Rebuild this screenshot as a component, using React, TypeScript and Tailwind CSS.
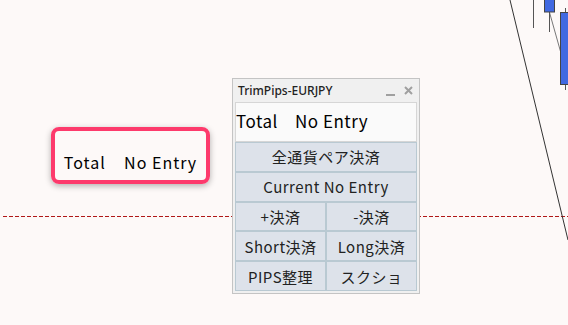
import React from "react";

const jp = { fontFamily: '"Noto Sans CJK JP", "Noto Sans", sans-serif' };

function ChartLayer() {
  return (
    <svg className="absolute inset-0" width={568} height={325} viewBox="0 0 568 325">
      {/* bid line */}
      <line x1={3} y1={216.5} x2={568} y2={216.5} stroke="#b01818" strokeWidth={1.2} strokeDasharray="4 2" />
      {/* trend line */}
      <line x1={510} y1={0} x2={568} y2={240} stroke="#333" strokeWidth={1} />
      {/* moving average */}
      <line x1={546} y1={0} x2={568} y2={78} stroke="#777" strokeWidth={1} />
      {/* candles */}
      <line x1={533.5} y1={0} x2={533.5} y2={28} stroke="#555" strokeWidth={1} />
      <line x1={549.5} y1={12} x2={549.5} y2={32} stroke="#555" strokeWidth={1} />
      <rect x={544.5} y={-1} width={10} height={13} fill="#4169e1" stroke="#444" strokeWidth={1} />
      <line x1={565.5} y1={8} x2={565.5} y2={90} stroke="#555" strokeWidth={1} />
      <rect x={560.5} y={12.5} width={10} height={72} fill="#4169e1" stroke="#444" strokeWidth={1} />
    </svg>
  );
}

function Btn({ label, className = "" }: { label: string; className?: string }) {
  return (
    <div
      className={`flex items-center justify-center border border-[#b9c9d2] bg-[#dde2ea] text-[15px] leading-none tracking-[0.5px] text-[#222] ${className}`}
      style={jp}
    >
      {label}
    </div>
  );
}

function Panel() {
  return (
    <div className="absolute left-[232px] top-[78px] flex h-[216px] w-[188px] flex-col border border-[#c4c4c4] bg-[#f0f0f0] px-[2px] pb-[2px]">
      <div className="flex h-[23px] items-center justify-between pl-[3px] pr-[4px]">
        <span className="text-[12px] font-medium text-[#222]" style={{ fontFamily: '"Noto Sans", sans-serif' }}>
          TrimPips-EURJPY
        </span>
        <div className="flex items-center gap-[9px]">
          <span className="mt-[9px] block h-[2px] w-[9px] bg-[#a0a0a0]" />
          <svg width={9} height={9} viewBox="0 0 9 9">
            <path d="M1 1 L8 8 M8 1 L1 8" stroke="#a0a0a0" strokeWidth={2} />
          </svg>
        </div>
      </div>
      <div
        className="flex h-[40px] items-center border border-[#d6d6d6] bg-[#fafafa] pb-[3px] text-[17px] tracking-[0.5px] text-black"
        style={jp}
      >
        Total&nbsp;&nbsp;&nbsp;&nbsp;No Entry
      </div>
      <div className="grid flex-1 grid-cols-2 grid-rows-5">
        <Btn label="全通貨ペア決済" className="col-span-2" />
        <Btn label="Current No Entry" className="col-span-2" />
        <Btn label="+決済" />
        <Btn label="-決済" />
        <Btn label="Short決済" />
        <Btn label="Long決済" />
        <Btn label="PIPS整理" />
        <Btn label="スクショ" />
      </div>
    </div>
  );
}

export default function App() {
  return (
    <div className="relative h-[325px] w-[568px] overflow-hidden bg-[#fdf9f8]">
      <ChartLayer />
      <div
        className="absolute left-[51px] top-[127px] flex h-[57px] w-[159px] items-center justify-center rounded-[8px] border-[4px] border-[#fd3a6c] pt-[12px] text-[16px] tracking-[1px] text-black shadow-[0_2px_6px_rgba(0,0,0,0.3)]"
        style={jp}
      >
        Total&nbsp;&nbsp;&nbsp;&nbsp;No Entry
      </div>
      <Panel />
    </div>
  );
}
